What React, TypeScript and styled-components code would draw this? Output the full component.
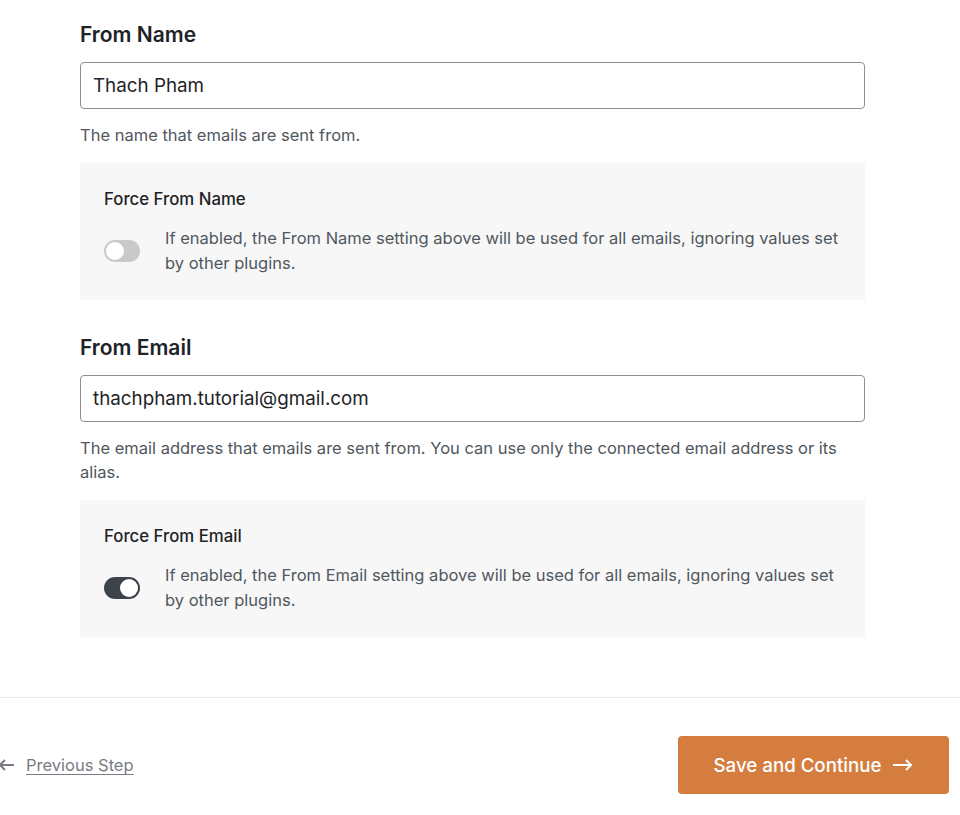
import React from "react";
import styled, { createGlobalStyle } from "styled-components";

const GlobalStyle = createGlobalStyle`
  body {
    margin: 0;
    background: #ffffff;
    font-family: Inter, "Noto Sans", "Liberation Sans", sans-serif;
    color: #1d2327;
  }
`;

const Page = styled.div`
  width: 960px;
  overflow: hidden;
`;

const Content = styled.div`
  width: 785px;
  padding: 23px 0 60px 80px;
`;

const Field = styled.div`
  & + & {
    margin-top: 36px;
  }
`;

const Heading = styled.h2`
  margin: 0 0 15px;
  font-size: 21px;
  line-height: 24px;
  font-weight: 600;
  color: #1d2327;
`;

const TextInput = styled.input`
  box-sizing: border-box;
  display: block;
  width: 100%;
  height: 47px;
  padding: 0 12px;
  border: 1px solid #8c8f94;
  border-radius: 4px;
  font-family: inherit;
  font-size: 18.8px;
  color: #1d2327;
  background: #fff;
  outline: none;
`;

const Help = styled.p`
  margin: 14px 0 16px;
  font-size: 16.5px;
  line-height: 24px;
  color: #50575e;
`;

const ForceBox = styled.div`
  background: #f7f7f7;
  padding: 26px 24px 24px;
`;

const ForceLabel = styled.div`
  font-size: 16.8px;
  line-height: 20px;
  font-weight: 500;
  color: #1d2327;
  margin-bottom: 17px;
`;

const ForceRow = styled.div`
  display: flex;
  align-items: center;
  gap: 25px;
`;

const Track = styled.span<{ $on: boolean }>`
  position: relative;
  flex: none;
  width: 36px;
  height: 22px;
  border-radius: 11px;
  background: ${(p) => (p.$on ? "#3c434a" : "#c8c9cb")};
`;

const Knob = styled.span<{ $on: boolean }>`
  position: absolute;
  top: 2px;
  left: ${(p) => (p.$on ? "16px" : "2px")};
  width: 18px;
  height: 18px;
  border-radius: 50%;
  background: #fff;
`;

const Desc = styled.p`
  margin: 0;
  font-size: 16.5px;
  line-height: 25px;
  color: #50575e;
`;

const Footer = styled.div`
  border-top: 1px solid #e8e8e8;
  display: flex;
  align-items: center;
  justify-content: space-between;
  padding: 38px 11px 30px 0;
`;

const PrevLink = styled.a`
  display: flex;
  align-items: center;
  gap: 12px;
  margin-left: -2px;
  font-size: 16.5px;
  color: #787c82;
  text-decoration: underline;
  text-underline-offset: 3px;
  cursor: pointer;
`;

const SaveButton = styled.button`
  display: flex;
  align-items: center;
  justify-content: center;
  gap: 12px;
  width: 271px;
  height: 58px;
  border: none;
  border-radius: 4px;
  background: #d57d3f;
  color: #fff;
  font-family: inherit;
  font-size: 18.7px;
  font-weight: 500;
  cursor: pointer;
`;

const Toggle = ({ on }: { on: boolean }) => (
  <Track $on={on}>
    <Knob $on={on} />
  </Track>
);

type ForceProps = { label: string; on: boolean; text: string };

const Force = ({ label, on, text }: ForceProps) => (
  <ForceBox>
    <ForceLabel>{label}</ForceLabel>
    <ForceRow>
      <Toggle on={on} />
      <Desc>{text}</Desc>
    </ForceRow>
  </ForceBox>
);

const Arrow = ({ left }: { left?: boolean }) => (
  <svg
    width={left ? 16 : 20}
    height="12"
    viewBox={left ? "4 0 16 12" : "0 0 20 12"}
    fill="none"
    stroke="currentColor"
    strokeWidth="2"
    style={left ? { transform: "scaleX(-1)" } : undefined}
  >
    <path d="M0 6h18M13 1l5 5-5 5" />
  </svg>
);

export default function App() {
  return (
    <Page>
      <GlobalStyle />
      <Content>
        <Field>
          <Heading>From Name</Heading>
          <TextInput defaultValue="Thach Pham" />
          <Help>The name that emails are sent from.</Help>
          <Force
            label="Force From Name"
            on={false}
            text="If enabled, the From Name setting above will be used for all emails, ignoring values set by other plugins."
          />
        </Field>
        <Field>
          <Heading>From Email</Heading>
          <TextInput defaultValue="thachpham.tutorial@gmail.com" />
          <Help>
            The email address that emails are sent from. You can use only the
            connected email address or its alias.
          </Help>
          <Force
            label="Force From Email"
            on={true}
            text="If enabled, the From Email setting above will be used for all emails, ignoring values set by other plugins."
          />
        </Field>
      </Content>
      <Footer>
        <PrevLink>
          <Arrow left />
          Previous Step
        </PrevLink>
        <SaveButton>
          Save and Continue
          <Arrow />
        </SaveButton>
      </Footer>
    </Page>
  );
}
